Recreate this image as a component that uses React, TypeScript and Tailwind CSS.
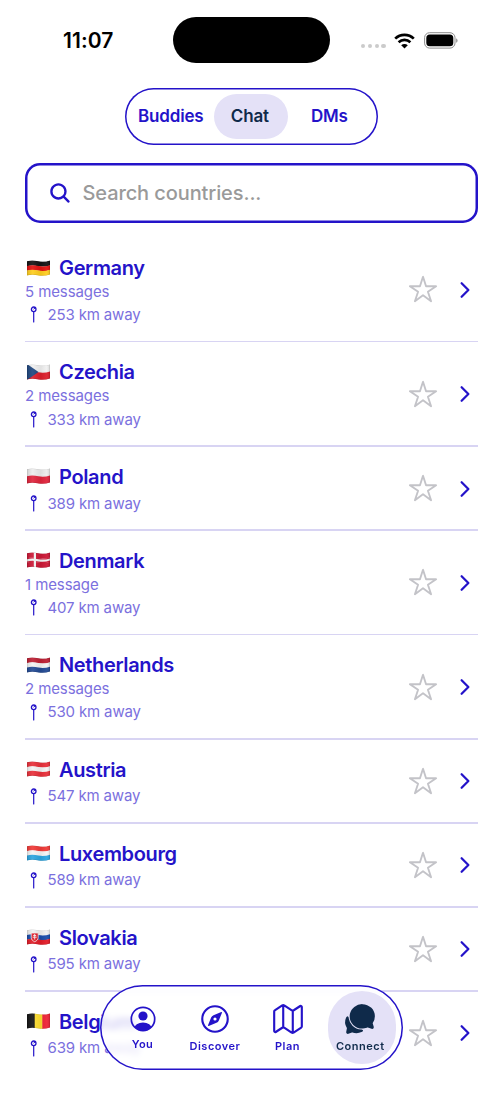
import React, { useState } from 'react';
import {
  IoSearch,
  IoStarOutline,
  IoChevronForward,
  IoCompassOutline,
  IoMapOutline,
  IoChatbubbles,
} from 'react-icons/io5';

interface Country {
  code: string;
  name: string;
  distance: number;
  messages?: number;
}

const COUNTRIES: Country[] = [
  { code: 'de', name: 'Germany', distance: 253, messages: 5 },
  { code: 'cz', name: 'Czechia', distance: 333, messages: 2 },
  { code: 'pl', name: 'Poland', distance: 389 },
  { code: 'dk', name: 'Denmark', distance: 407, messages: 1 },
  { code: 'nl', name: 'Netherlands', distance: 530, messages: 2 },
  { code: 'at', name: 'Austria', distance: 547 },
  { code: 'lu', name: 'Luxembourg', distance: 589 },
  { code: 'sk', name: 'Slovakia', distance: 595 },
  { code: 'be', name: 'Belgium', distance: 639 },
];

const STRIPES: Record<string, string[]> = {
  de: ['#141414', '#e3120f', '#ffce1f'],
  cz: ['#f0f0f0', '#f0f0f0', '#dc1f2c'],
  pl: ['#ececec', '#ececec', '#e0243c'],
  dk: ['#cc1836', '#cc1836', '#cc1836'],
  nl: ['#bd2034', '#f4f4f4', '#234a94'],
  at: ['#e8303a', '#f4f4f4', '#e8303a'],
  lu: ['#f03a38', '#f4f4f4', '#2ba5e0'],
  sk: ['#f0f0f0', '#1a4cab', '#e21c28'],
  be: ['#141414', '#ffdf30', '#ee2436'],
};

// one waving horizontal band, `top` and `bottom` measured at the hoist side
const band = (top: number, bottom: number) =>
  `M0 ${top}C4 ${top - 1.2} 7.5 ${top - 0.8} 11.5 ${top}S19 ${top + 0.4} 23 ${top - 0.8}V${bottom - 0.8}C19 ${bottom + 0.4} 15.5 ${bottom + 0.8} 11.5 ${bottom}S4 ${bottom - 1.2} 0 ${bottom}Z`;

const Flag = ({ code }: { code: string }) => {
  const colors = STRIPES[code];
  const clip = `flag-${code}`;
  return (
    <svg width="23" height="16" viewBox="0 0 23 16" className="mb-[2px] shrink-0">
      <defs>
        <clipPath id={clip}>
          <path d={band(1.2, 15.4)} />
        </clipPath>
        <linearGradient id={`${clip}-shade`}>
          <stop offset="0" stopColor="#000" stopOpacity="0.12" />
          <stop offset="0.25" stopColor="#fff" stopOpacity="0.08" />
          <stop offset="0.6" stopColor="#000" stopOpacity="0.06" />
          <stop offset="0.85" stopColor="#fff" stopOpacity="0.05" />
          <stop offset="1" stopColor="#000" stopOpacity="0.12" />
        </linearGradient>
      </defs>
      <g clipPath={`url(#${clip})`}>
        {code === 'be' ? (
          <>
            <path fill={colors[0]} d="M0 0h8v16H0z" />
            <path fill={colors[1]} d="M7.7 0h8v16h-8z" />
            <path fill={colors[2]} d="M15.3 0H23v16h-7.7z" />
          </>
        ) : (
          <>
            <path fill={colors[0]} d={band(1, 6.2)} />
            <path fill={colors[1]} d={band(6, 10.8)} />
            <path fill={colors[2]} d={band(code === 'cz' || code === 'pl' ? 8.3 : 10.6, 16)} />
          </>
        )}
        {code === 'cz' && <path fill="#1f477f" d="M0 0L11.5 8L0 16z" />}
        {code === 'dk' && (
          <>
            <path fill="#f4f4f4" d={band(7.2, 9.4)} />
            <path fill="#f4f4f4" d="M6.8 0h2.2v16H6.8z" />
          </>
        )}
        {code === 'sk' && (
          <>
            <path fill="#e21c28" stroke="#f0f0f0" strokeWidth="0.8" d="M4.200 4h7v4.500c0 2.200-1.600 3.400-3.500 4.200-1.900-.8-3.500-2-3.500-4.200z" />
            <path stroke="#f4f4f4" strokeWidth="0.9" d="M7.700 5v5.500M6.200 6.500h3M5.700 8.200h4" />
          </>
        )}
        <path fill={`url(#${clip}-shade)`} d="M0 0h23v16H0z" />
        <path fill="none" stroke="#000" strokeOpacity="0.16" strokeWidth="0.8" d={band(1.2, 15.4)} />
      </g>
    </svg>
  );
};

const StatusBar = () => (
  <div className="flex h-[80px] items-start">
    <div className="ml-[63px] mt-[26px] w-[110px] text-[21px] font-semibold leading-[30px] tracking-[0.1px] text-black">11:07</div>
    <div className="mt-[17px] h-[46px] w-[157px] rounded-full bg-black" />
    <div className="ml-[31px] mt-[44px] flex gap-[2.600px]">
      {[0, 1, 2, 3].map((i) => (
        <span key={i} className="size-[4.200px] rounded-full bg-[#cbcbcb]" />
      ))}
    </div>
    <svg width="21" height="16" viewBox="0 0 21 16" className="ml-[8.500px] mt-[32.500px]" fill="none" stroke="#000" strokeWidth="2.700">
      <path d="M1.200 5.600C6.400 0.600 14.600 0.600 19.800 5.600" />
      <path d="M4.600 9.200C8 6.100 13 6.100 16.400 9.200" />
      <path fill="#000" stroke="none" d="M10.500 15.600L7.200 12.300C9 10.700 12 10.700 13.800 12.300z" />
    </svg>
    <svg width="35" height="17" viewBox="0 0 35 17" className="ml-[9px] mt-[32px]">
      <rect x="0.600" y="0.700" width="30.400" height="15.400" rx="5" fill="none" stroke="#8c8c8c" strokeWidth="1" />
      <rect x="2.300" y="2.500" width="27" height="11.800" rx="3.500" fill="#000" />
      <path fill="#8c8c8c" d="M32.200 6.200c1.800.8 1.800 3.800 0 4.600z" />
    </svg>
  </div>
);

const TABS = ['Buddies', 'Chat', 'DMs'];

const TopTabs = () => {
  const [active, setActive] = useState('Chat');
  return (
    <div className="mx-auto mt-[7.500px] flex h-[57px] w-[253px] items-center rounded-full px-[8px] shadow-[inset_0_0_0_1.5px_#2413c9]">
      {TABS.map((tab) => (
        <button
          key={tab}
          onClick={() => setActive(tab)}
          className={`h-[45px] rounded-full pt-[2px] text-[17px] font-semibold tracking-[-0.200px] ${
            tab === 'Buddies' ? 'w-[77px]' : tab === 'Chat' ? 'ml-[5.500px] w-[75px] pr-[2px]' : 'ml-px w-[83px]'
          } ${active === tab ? 'bg-[#e4e1f7] text-[#0f2a4a]' : 'text-[#2413c9]'}`}
        >
          {tab}
        </button>
      ))}
    </div>
  );
};

const PinIcon = () => (
  <svg width="17" height="17" viewBox="0 0 17 17" fill="none" stroke="#2413c9" className="mb-px shrink-0">
    <circle cx="8.700" cy="3.300" r="2.300" strokeWidth="1.300" />
    <path d="M8.700 5.800v10.200" strokeWidth="1.200" strokeLinecap="round" />
    <path d="M8.800 2.900l1-.7" strokeWidth="1" strokeLinecap="round" />
  </svg>
);

const CountryRow = ({ country, last }: { country: Country; last: boolean }) => (
  <li>
    <div className="flex items-center">
      <div className="flex-1 pb-[12.500px] pt-[17px]">
        <div className="flex h-[27px] items-center pl-[2px]">
          <Flag code={country.code} />
          <span className="ml-[9px] text-[20px] font-semibold leading-[27px] tracking-[-0.350px] text-[#2413c9]">{country.name}</span>
        </div>
        {country.messages && (
          <div className="h-[20.400px] text-[15px] leading-[20px] tracking-[-0.100px] text-[#7b70de]">
            {country.messages} {country.messages === 1 ? 'message' : 'messages'}
          </div>
        )}
        <div className="flex h-[26px] items-center">
          <PinIcon />
          <span className="ml-[5.500px] text-[15px] tracking-[-0.150px] text-[#7b70de]">{country.distance} km away</span>
        </div>
      </div>
      <IoStarOutline className="size-[30px] text-[#c3c3c8]" />
      <IoChevronForward className="ml-[15px] mr-px mt-px size-[24px] stroke-[10px] text-[#2413c9]" />
    </div>
    <div className={`h-[1.500px] ${last ? '' : 'bg-[#d8d4f3]'}`} />
  </li>
);

const PersonCircle = () => (
  <svg width="26" height="26" viewBox="0 0 26 26">
    <clipPath id="person-clip">
      <circle cx="13" cy="13" r="12" />
    </clipPath>
    <circle cx="13" cy="13" r="11.700" fill="none" stroke="currentColor" strokeWidth="1.700" />
    <circle cx="13" cy="10" r="4.600" fill="currentColor" />
    <ellipse cx="13" cy="22.700" rx="8.800" ry="6.200" fill="currentColor" clipPath="url(#person-clip)" />
  </svg>
);

const NavBar = () => (
  <nav className="fixed left-[100px] top-[985px] flex h-[85px] w-[303px] rounded-full bg-white/80 px-[6px] pt-[6px] text-[11px] font-semibold tracking-[0.5px] text-[#2413c9] shadow-[inset_0_0_0_1.5px_#2413c9] backdrop-blur-[3px]">
    <a className="flex h-[73px] w-[73px] flex-col items-center pt-[15px]">
      <PersonCircle />
      <span className="mt-[4px] leading-[16px]">You</span>
    </a>
    <a className="flex h-[73px] w-[72px] flex-col items-center pt-[11px]">
      <IoCompassOutline className="size-[34px]" />
      <span className="mt-[2px] leading-[16px]">Discover</span>
    </a>
    <a className="flex h-[73px] w-[73px] flex-col items-center pt-[11px]">
      <IoMapOutline className="size-[34px]" />
      <span className="mt-[2px] leading-[16px]">Plan</span>
    </a>
    <a className="ml-[3.500px] flex h-[73px] w-[68.500px] flex-col items-center rounded-[34px] bg-[#e4e1f7] pr-[3px] pt-[11px] text-[#0f2a4a]">
      <IoChatbubbles className="size-[34px]" />
      <span className="mt-[2px] leading-[16px]">Connect</span>
    </a>
  </nav>
);

export default function App() {
  return (
    <div className="h-[1095px] w-[503px] overflow-hidden bg-white font-['Inter',sans-serif]">
      <StatusBar />
      <TopTabs />
      <div className="mx-[25px] mt-[18.500px] flex h-[60px] items-center rounded-[15px] pl-[23px] shadow-[inset_0_0_0_2.5px_#2413c9]">
        <IoSearch className="size-[24px] text-[#2413c9]" />
        <input
          className="ml-[10.500px] flex-1 bg-transparent text-[20px] font-medium tracking-[-0.100px] text-black outline-none placeholder:text-[#9a9a9a]"
          placeholder="Search countries..."
        />
      </div>
      <ul className="mx-[25px] mt-[15px]">
        {COUNTRIES.map((country, i) => (
          <CountryRow key={country.code} country={country} last={i === COUNTRIES.length - 1} />
        ))}
      </ul>
      <NavBar />
    </div>
  );
}
